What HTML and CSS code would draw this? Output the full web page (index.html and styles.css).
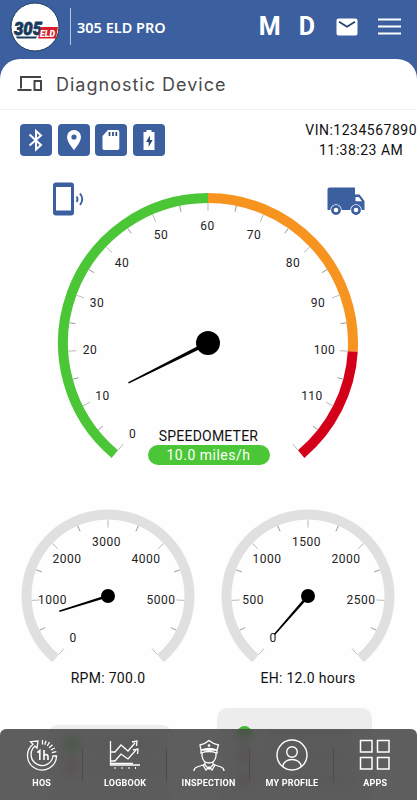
FILE: index.html
```
<!DOCTYPE html>
<html lang="en">
<head>
    <meta charset="UTF-8">
    <meta name="viewport" content="width=device-width, initial-scale=1.0">
    <title>305 ELD PRO</title>
    <link rel="stylesheet" href="styles.css">
</head>
<body>
    <header class="topbar">
        <svg class="logo" width="50" height="50" viewBox="0 0 50 50">
            <circle cx="25" cy="25" r="24" fill="#fff" stroke="#173a5c" stroke-width="1"/>
            <text class="logo-num" x="4" y="32.500" textLength="28" lengthAdjust="spacingAndGlyphs">305</text>
            <path d="M6 34.500h21l-1 2H7z" fill="#173a5c"/>
            <path d="M31 25h17l-2 11.500H28z" fill="#d8202c"/>
            <text class="logo-eld" x="30" y="34.500" textLength="15" lengthAdjust="spacingAndGlyphs">ELD</text>
        </svg>
        <span class="brand">305 ELD PRO</span>
        <span class="letter letter-m">M</span>
        <span class="letter letter-d">D</span>
        <svg class="mail" width="22" height="18" viewBox="0 0 22 18">
            <rect x="0.500" y="0.500" width="21" height="17" rx="2" fill="#fff"/>
            <path d="M3 3.800l8 5 8-5" fill="none" stroke="#24446f" stroke-width="1.800"/>
        </svg>
        <svg class="menu" width="23" height="17" viewBox="0 0 23 17">
            <path d="M0 1.500h23M0 8.500h23M0 15.500h23" stroke="#fff" stroke-width="2.200"/>
        </svg>
    </header>

    <div class="title-wrap">
        <div class="title-bar">
            <svg width="26" height="20" viewBox="0 0 26 20" fill="none" stroke="#444" stroke-width="2">
                <path d="M24 3H4v11.500M0.500 16h14" />
                <path d="M17.500 7h6.500v9h-6.500z"/>
            </svg>
            <h1>Diagnostic Device</h1>
        </div>
    </div>

    <main>
        <div class="status-row">
            <div class="badges">
                <span class="badge">
                    <svg width="32" height="32" viewBox="0 0 32 32"><path d="M9.500 10.500l11.500 10.500-5 4.500V7l5 4.500L9.500 21.500" fill="none" stroke="#fff" stroke-width="2"/></svg>
                </span>
                <span class="badge">
                    <svg width="32" height="32" viewBox="0 0 32 32"><path fill="#fff" fill-rule="evenodd" d="M16 6a7 7 0 0 0-7 7c0 5.200 7 13 7 13s7-7.800 7-13a7 7 0 0 0-7-7zm0 4.400a2.600 2.600 0 1 1 0 5.200 2.600 2.600 0 0 1 0-5.200z"/></svg>
                </span>
                <span class="badge">
                    <svg width="32" height="32" viewBox="0 0 32 32"><path d="M13 6h9.500a1.800 1.800 0 0 1 1.800 1.800v16.400a1.800 1.800 0 0 1-1.800 1.800H9.300a1.800 1.800 0 0 1-1.800-1.800V12z" fill="#fff"/><path d="M14.500 8v4M18 8v4M21.300 8v4" stroke="#29487c" stroke-width="1.700"/></svg>
                </span>
                <span class="badge">
                    <svg width="32" height="32" viewBox="0 0 32 32"><path d="M13.500 6h5v2h3v18h-11V8h3z" fill="#fff"/><path d="M17 11.500l-4 6.500h2.600v5l4-7H17z" fill="#29487c"/></svg>
                </span>
            </div>
            <div class="vin">
                <div>VIN:1234567890</div>
                <div>11:38:23 AM</div>
            </div>
        </div>

        <section class="speed">
            <svg class="gauge" id="speedGauge" width="310" height="280" viewBox="-155 -155 310 280"></svg>
            <svg class="phone" width="32" height="34" viewBox="0 0 32 34">
                <rect x="1.500" y="2" width="18" height="30" rx="1.500" fill="none" stroke="#3b5f9f" stroke-width="3"/>
                <path d="M2 3h17M2 30.500h17" stroke="#3b5f9f" stroke-width="4"/>
                <path d="M23.500 14.500q2 2.700 0 5.400M27 11.500q4.500 5.700 0 11.400" fill="none" stroke="#3b5f9f" stroke-width="1.900"/>
            </svg>
            <svg class="truck" width="38" height="29" viewBox="0 0 38 29">
                <path d="M2.500 0.500H28v7h4.500l5 6.500v9H0.500V2.500a2 2 0 0 1 2-2z" fill="#3b5f9f"/>
                <path d="M28.500 10h3.300l3.200 4.200h-6.500z" fill="#fff"/>
                <circle cx="9" cy="23" r="5.700" fill="#fff"/>
                <circle cx="29" cy="23" r="5.700" fill="#fff"/>
                <circle cx="9" cy="23" r="3.600" fill="none" stroke="#3b5f9f" stroke-width="2.600"/>
                <circle cx="29" cy="23" r="3.600" fill="none" stroke="#3b5f9f" stroke-width="2.600"/>
            </svg>
            <div class="speed-info">
                <div class="speed-name">SPEEDOMETER</div>
                <div class="speed-value">10.0 miles/h</div>
            </div>
        </section>

        <section class="small-gauges">
            <div class="small">
                <svg class="gauge" id="rpmGauge" width="180" height="160" viewBox="-90 -90 180 160"></svg>
                <div class="small-name">RPM: 700.0</div>
            </div>
            <div class="small">
                <svg class="gauge" id="ehGauge" width="180" height="160" viewBox="-90 -90 180 160"></svg>
                <div class="small-name">EH: 12.0 hours</div>
            </div>
        </section>

        <section class="cards">
            <div class="card card-left">
                <div class="line"><i class="dot green"></i><i class="bar"></i></div>
                <div class="line"><i class="dot red"></i><i class="bar"></i></div>
            </div>
            <div class="card card-right">
                <div class="line"><i class="dot green"></i><i class="bar"></i></div>
                <div class="line"><i class="dot red"></i><i class="bar"></i></div>
                <div class="line"><i class="dot red"></i><i class="bar"></i></div>
            </div>
        </section>
    </main>

    <nav class="bottom-nav">
        <a class="nav-item">
            <svg width="34" height="34" viewBox="0 0 34 34" fill="none" stroke="#fff" stroke-width="1.300">
                <path d="M31.500 18A14.500 14.500 0 1 1 8 6.200L5.500 3.700l7.500-.7-1 7.200-2-2.100A11 11 0 1 0 28 18z"/>
                <path d="M17.500 2v4.500M21 2.800l-1.200 4M24.500 4.200L22.200 8M27.500 6.800l-3.300 3M29.800 10l-4 2M31.300 13.700l-4.500.9"/>
                <path d="M12.300 14.500l2.500-2v9.500M19 12v10M19 18q1.300-2 3-1.300 1 .5 1 2V22" stroke-width="1.600"/>
            </svg>
            <span>HOS</span>
        </a>
        <a class="nav-item">
            <svg width="34" height="34" viewBox="0 0 34 34" fill="none" stroke="#fff" stroke-width="1.300">
                <path d="M2.500 3v24H32"/>
                <path d="M3 14h4l6-7 7 6 7-8M3 23h4l6-7 7 5 8-9M3 25.500h22" />
                <path d="M24 4l5-1-.5 5M25 12l5-1-.5 5"/>
                <path d="M7 29v2M14 29v2M21 29v2M27.500 29v2" stroke-width="1"/>
            </svg>
            <span>LOGBOOK</span>
        </a>
        <a class="nav-item">
            <svg width="34" height="34" viewBox="0 0 34 34" fill="none" stroke="#fff" stroke-width="1.300">
                <path d="M8 7q5-1 9-4.500Q21 6 26.500 7L25 12H9zM9 12q8-3 16 0v3q-8-3-16 0z"/>
                <circle cx="17" cy="7.500" r=".7"/>
                <path d="M10 15v3q1 7 7 7t7-7v-3M13 24v3l4 4 4-4v-3M13 26l-2 1 3 5 3-3 3 3 3-5-2-1M11 27l-6 2q-3 1-3 4M23 27l6 2q3 1 3 4"/>
            </svg>
            <span>INSPECTION</span>
        </a>
        <a class="nav-item">
            <svg width="34" height="34" viewBox="0 0 34 34" fill="none" stroke="#fff" stroke-width="1.400">
                <circle cx="17" cy="17" r="15"/>
                <circle cx="17" cy="14" r="5.300"/>
                <path d="M7.500 28.500q2-7 9.500-7t9.500 7"/>
            </svg>
            <span>MY PROFILE</span>
        </a>
        <a class="nav-item">
            <svg width="34" height="34" viewBox="0 0 34 34" fill="none" stroke="#fff" stroke-width="1.500">
                <path d="M2.500 2.500h11.500v11.500H2.500zM19.500 2.500H31v11.500H19.500zM2.500 19.500h11.500V31H2.500zM19.500 19.500H31V31H19.500z"/>
            </svg>
            <span>APPS</span>
        </a>
    </nav>

    <script>
        const START = -140;
        const SWEEP = 280;

        // angle is measured clockwise from 12 o'clock
        function point(deg, r) {
            const a = deg * Math.PI / 180;
            return (Math.sin(a) * r).toFixed(2) + ' ' + (-Math.cos(a) * r).toFixed(2);
        }

        function arc(from, to, r, color) {
            const large = to - from > 180 ? 1 : 0;
            return `<path d="M${point(from, r)}A${r} ${r} 0 ${large} 1 ${point(to, r)}" fill="none" stroke="${color}" stroke-width="10"/>`;
        }

        function drawGauge(id, g) {
            const angle = v => START + SWEEP * v / g.max;
            let out = '';
            g.ranges.forEach(r => out += arc(angle(r[0]), angle(r[1]), g.radius - 5, r[2]));

            for (let i = 0; i <= g.ticks; i++) {
                const a = START + SWEEP * i / g.ticks;
                const major = i % 2 === 0;
                const inner = g.radius - 10;
                out += `<path d="M${point(a, inner)}L${point(a, inner - (major ? 8 : 6))}" stroke="${major ? '#bbb' : '#999'}"/>`;
            }

            g.labels.forEach(l => out += `<text x="${l[1]}" y="${l[2]}">${l[0]}</text>`);

            const n = angle(g.value);
            out += `<path d="M${point(n - 90, g.thick)}L${point(n, g.needle)}L${point(n + 90, g.thick)}z" stroke="#000" stroke-width="1.500"/>`;
            out += `<circle r="${g.hub}"/>`;
            document.getElementById(id).innerHTML = out;
        }

        drawGauge('speedGauge', {
            max: 120, value: 10, ticks: 24, radius: 150, needle: 89, hub: 12, thick: 1.2,
            ranges: [[0, 60, '#4bc636'], [60, 100, '#f7941f'], [100, 120, '#d4001a']],
            labels: [['0', -75.5, 95], ['10', -105.5, 57], ['20', -118, 11], ['30', -111, -36.5], ['40', -86, -76.500],
                ['50', -47, -104], ['60', -0.5, -113.500], ['70', 46, -104], ['80', 85, -76.500], ['90', 110, -36.500],
                ['100', 116.500, 11], ['110', 104, 57]]
        });

        const grey = '#e0e0e0';
        drawGauge('rpmGauge', {
            max: 6000, value: 700, ticks: 12, radius: 86.5, needle: 51, hub: 7, thick: 0.6,
            ranges: [[0, 6000, grey]],
            labels: [['0', -35, 46], ['1000', -55.5, 7.5], ['2000', -41, -33], ['3000', -1.5, -50], ['4000', 38, -33], ['5000', 53, 7.5]]
        });
        drawGauge('ehGauge', {
            max: 3000, value: 12, ticks: 12, radius: 86.5, needle: 51, hub: 7, thick: 0.6,
            ranges: [[0, 3000, grey]],
            labels: [['0', -35, 46], ['500', -55, 7.5], ['1000', -41, -33], ['1500', -1.5, -50], ['2000', 38, -33], ['2500', 53, 7.5]]
        });
    </script>
</body>
</html>
```
FILE: styles.css
```
* {
    box-sizing: border-box;
}
body {
    margin: 0;
    height: 800px;
    overflow: hidden;
    background: #fefefe;
    color: #111;
    font-family: Roboto, sans-serif;
}
svg {
    display: block;
    flex: none;
}
.topbar {
    display: flex;
    align-items: center;
    height: 59px;
    padding: 0 16px 6px 10px;
    background: #3b5f9f;
    color: #fff;
}
.logo-num {
    font: italic 900 19px Roboto, sans-serif;
    fill: #173a5c;
    stroke: #173a5c;
    stroke-width: 0.8px;
}
.logo-eld {
    font: italic 900 9.500px Roboto, sans-serif;
    fill: #fff;
}
.brand {
    display: flex;
    align-items: center;
    height: 37px;
    margin-left: 10px;
    padding-left: 6px;
    border-left: 1px solid #b9c7de;
    font-family: "Noto Sans", sans-serif;
    font-size: 14.500px;
    font-weight: 600;
    white-space: nowrap;
}
.letter {
    font-size: 25px;
    font-weight: 700;
}
.letter-m {
    margin-left: auto;
}
.letter-d {
    margin-left: 18px;
}
.mail {
    margin-left: 21px;
}
.menu {
    margin-left: 20px;
}
.title-wrap {
    height: 50px;
    background: #3b5f9f;
}
.title-bar {
    display: flex;
    align-items: center;
    height: 51px;
    padding: 0 17px;
    background: #fff;
    border-radius: 20px 20px 0 0;
    border-bottom: 1px solid #eee;
}
h1 {
    margin: 0 0 0 13px;
    color: #4a4a4a;
    font-family: Inter, sans-serif;
    font-size: 18px;
    font-weight: 400;
    letter-spacing: 1px;
    white-space: nowrap;
}
.status-row {
    display: flex;
    justify-content: space-between;
    height: 69px;
    padding: 15px 0 0 20px;
}
.badges {
    display: flex;
    gap: 5.500px;
}
.badge {
    width: 32px;
    height: 32px;
    border-radius: 4px;
    background: #3b5f9f;
}
.vin {
    margin-top: -4px;
    font-size: 14px;
    line-height: 20px;
    letter-spacing: 0.500px;
    text-align: center;
    white-space: nowrap;
}
.speed {
    position: relative;
    height: 320px;
    padding: 10px 0 0 53px;
}
.gauge text {
    font-size: 12px;
    letter-spacing: 0.500px;
    text-anchor: middle;
    fill: #222;
}
.phone {
    position: absolute;
    left: 53px;
    top: 4px;
}
.truck {
    position: absolute;
    left: 327px;
    top: 9px;
}
.speed-info {
    display: flex;
    flex-direction: column;
    align-items: center;
    margin-top: -41px;
    margin-left: -53px;
    position: relative;
}
.speed-name {
    font-size: 14px;
    line-height: 18px;
    letter-spacing: 0.200px;
}
.speed-value {
    width: 122px;
    height: 20px;
    border-radius: 10px;
    background: #4bc636;
    color: #fff;
    font-size: 14px;
    line-height: 21px;
    letter-spacing: 0.500px;
    text-align: center;
}
.small-gauges {
    display: flex;
    gap: 20px;
    padding: 8px 0 0 18px;
}
.small {
    width: 180px;
    text-align: center;
}
.small-name {
    margin-top: 3px;
    font-size: 14px;
    line-height: 18px;
    letter-spacing: 0.300px;
}
.cards {
    display: flex;
    align-items: flex-start;
    gap: 45px;
    padding: 21px 0 0 48px;
}
.card {
    display: flex;
    flex-direction: column;
    gap: 8px;
    padding: 18px 20px;
    border-radius: 10px;
    background: #ededed;
}
.card-left {
    width: 124px;
    height: 90px;
    margin-top: 17px;
    padding: 12px 16px;
}
.card-right {
    width: 155px;
    height: 110px;
}
.line {
    display: flex;
    align-items: center;
    gap: 14px;
}
.dot {
    width: 15px;
    height: 15px;
    border-radius: 50%;
}
.green {
    background: #3fba30;
}
.red {
    background: #c99;
}
.bar {
    flex: 1;
    height: 7px;
    background: #ccc;
}
.bottom-nav {
    position: absolute;
    left: 0;
    right: 0;
    top: 729px;
    display: flex;
    height: 71px;
    padding-top: 9px;
    border-radius: 6px 6px 0 0;
    background: rgba(70, 70, 70, 0.87);
    backdrop-filter: blur(6px);
}
.nav-item {
    position: relative;
    display: flex;
    flex: 1;
    flex-direction: column;
    align-items: center;
    color: #fff;
    font-size: 9px;
    font-weight: 700;
    line-height: 12px;
    letter-spacing: 0.200px;
    white-space: nowrap;
}
.nav-item span {
    margin-top: 5px;
}
.nav-item + .nav-item::before {
    content: "";
    position: absolute;
    left: -1px;
    top: 10px;
    width: 1px;
    height: 34px;
    background: #4c4c4c;
}
```
